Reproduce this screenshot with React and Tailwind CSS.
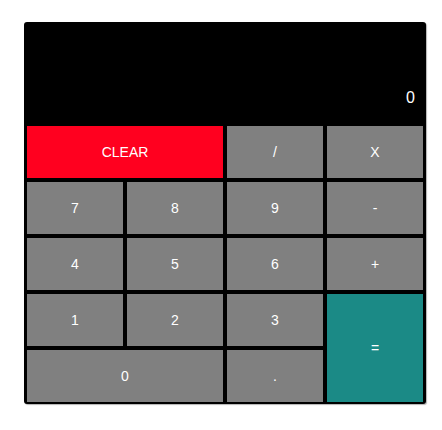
export default function App() {
  const btn = "flex items-center justify-center text-white text-[14px] bg-[#808080]";
  return (
    <div className="w-[442px] h-[430px] bg-white" style={{ fontFamily: '"Liberation Sans", Arial, sans-serif' }}>
      <div className="ml-[24px] pt-[22px]">
        <div className="w-[402px] bg-black rounded-[3px] pt-[3px] px-[3px] pb-[2px] shadow-[1px_1px_1px_rgba(0,0,0,0.3)]">
          <div className="h-[97px] mb-[4px] flex items-end justify-end pr-[8px] pb-[12px] text-white text-[16px]">0</div>
          <div className="grid grid-cols-4 gap-[4px] auto-rows-[52px]">
            <div className="col-span-2 flex items-center justify-center text-white text-[14px] bg-[#ff001f]">CLEAR</div>
            <div className={btn}>/</div>
            <div className={btn}>X</div>
            <div className={btn}>7</div>
            <div className={btn}>8</div>
            <div className={btn}>9</div>
            <div className={btn}>-</div>
            <div className={btn}>4</div>
            <div className={btn}>5</div>
            <div className={btn}>6</div>
            <div className={btn}>+</div>
            <div className={btn}>1</div>
            <div className={btn}>2</div>
            <div className={btn}>3</div>
            <div className="row-span-2 flex items-center justify-center text-white text-[14px] bg-[#1b8a86]">=</div>
            <div className={"col-span-2 " + btn}>0</div>
            <div className={btn}>.</div>
          </div>
        </div>
      </div>
    </div>
  );
}
